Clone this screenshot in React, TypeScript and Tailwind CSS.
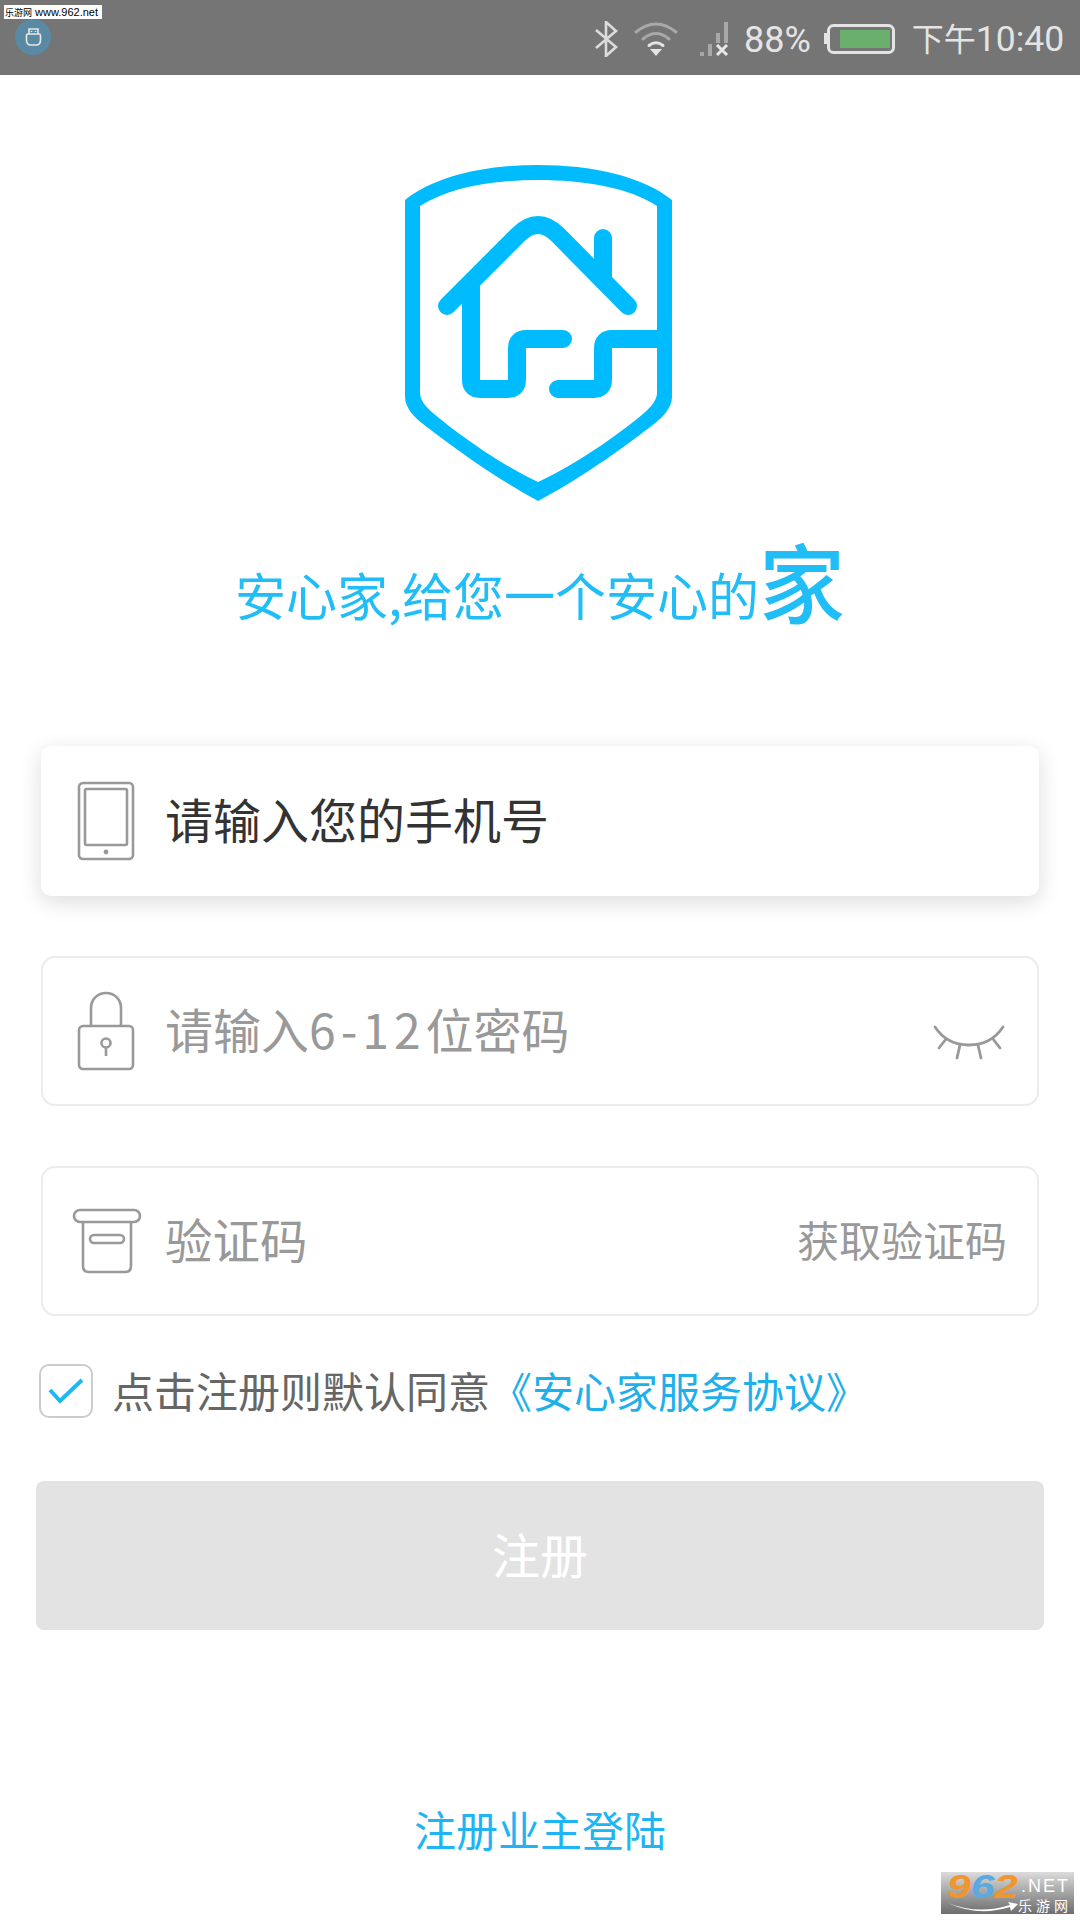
const F = '[font-family:"Noto_Sans_CJK_SC",sans-serif]';

// Shield-and-house brand mark
function BrandMark() {
  return (
    <svg width="320" height="360" viewBox="0 0 320 360" className="block" fill="none">
      <path
        fillRule="evenodd"
        fill="#00bcff"
        d="M25 50C55 26 105 15 158 15C212 15 262 26 292 50L292 247C292 258 282 268 274 274C252 291 207 325 158 351C110 325 65 291 43 274C35 268 25 258 25 247ZM40 56L40 243C40 250 46 257 53 263C68 276 115 312 158 332C202 312 249 276 264 263C271 257 277 250 277 243L277 56C250 38 205 30 158 30C110 30 68 38 40 56Z"
      />
      <g stroke="#00bcff" strokeWidth="18" strokeLinecap="round" strokeLinejoin="round">
        <path d="M67 156L138 85Q158 65 178 85L248 156" />
        <path d="M223 88L223 130" />
        <path d="M91 135L91 230Q91 239 100 239L128 239Q137 239 137 230L137 198Q137 189 146 189L183 189" />
        <path d="M178 239L214 239Q223 239 223 230L223 198Q223 189 232 189L280 189" />
      </g>
    </svg>
  );
}

function TabletIcon() {
  return (
    <svg width="58" height="80" viewBox="0 0 58 80" fill="none" stroke="#999" strokeWidth="2.6">
      <rect x="2" y="2" width="54" height="76" rx="4" />
      <rect x="8" y="8" width="42" height="56" rx="1.5" />
      <circle cx="29" cy="71" r="2.4" fill="#999" stroke="none" />
    </svg>
  );
}

function LockIcon() {
  return (
    <svg width="58" height="80" viewBox="0 0 58 80" fill="none" stroke="#999" strokeWidth="2.6">
      <rect x="2" y="35" width="54" height="43" rx="4" />
      <path d="M14 35V17C14 8 21 2 29 2C37 2 44 8 44 17V35" />
      <circle cx="29" cy="52" r="4.5" />
      <path d="M29 56.5V65" />
    </svg>
  );
}

function BoxIcon() {
  return (
    <svg width="70" height="66" viewBox="0 0 70 66" fill="none" stroke="#999" strokeWidth="2.6">
      <rect x="2" y="2" width="66" height="12" rx="6" />
      <path d="M11 14V58Q11 64 17 64H53Q59 64 59 58V14" />
      <rect x="18" y="27" width="34" height="8" rx="4" />
    </svg>
  );
}

function ClosedEye() {
  return (
    <svg width="72" height="38" viewBox="0 0 72 38" fill="none" stroke="#999" strokeWidth="2.8" strokeLinecap="round">
      <path d="M2 2Q14 20 36 20Q58 20 70 2" />
      <path d="M13 14L6 23" />
      <path d="M27 20L24 33" />
      <path d="M45 20L48 33" />
      <path d="M60 14L67 23" />
    </svg>
  );
}

function StatusIcons() {
  return (
    <>
      <svg width="24" height="36" viewBox="0 0 24 36" fill="none" stroke="#dcdcdc" strokeWidth="2.6" className="ml-[594px] mt-[2px]">
        <path d="M2 9L22 26L12 35V1L22 10L2 27" />
      </svg>
      <svg width="44" height="36" viewBox="0 0 44 36" fill="none" strokeLinecap="round" className="ml-[16px] mt-[2px]">
        <path d="M2 11Q22 -5 42 11" stroke="#a8a8a8" strokeWidth="3" />
        <path d="M9 18Q22 7 35 18" stroke="#a8a8a8" strokeWidth="3" />
        <path d="M15 24.5Q22 19 29 24.5" stroke="#e4e4e4" strokeWidth="3" />
        <path d="M16 28H28L22 35Z" fill="#e4e4e4" />
      </svg>
      <svg width="30" height="36" viewBox="0 0 30 36" className="ml-[22px] mt-[2px]" fill="#a8a8a8">
        <rect x="0" y="31" width="4" height="4" />
        <rect x="8" y="23" width="4" height="12" />
        <rect x="16" y="12" width="4" height="10" />
        <rect x="24" y="1" width="4" height="21" />
        <path d="M17 24L27 34M27 24L17 34" stroke="#e8e8e8" strokeWidth="3" fill="none" />
      </svg>
    </>
  );
}

export default function App() {
  return (
    <div className={`relative w-[1080px] h-[1920px] bg-white flex flex-col ${F}`}>
      <div className="relative h-[75px] bg-[#757575] flex items-center shrink-0">
        <StatusIcons />
        <span className="ml-[14px] mt-[4px] text-[36px] leading-none text-[#e4e4e4] font-['Roboto',sans-serif]">88%</span>
        <svg width="71" height="30" viewBox="0 0 71 30" className="ml-[13px] mt-[2px]" fill="none">
          <rect x="0" y="9" width="4" height="11" fill="#e4e4e4" />
          <rect x="4.5" y="1.5" width="65" height="27" rx="5" stroke="#e4e4e4" strokeWidth="3" />
          <rect x="16" y="6" width="50" height="18" fill="#6ab06c" />
        </svg>
        <span className="ml-[17px] mt-[4px] text-[32px] leading-none text-[#e4e4e4] whitespace-nowrap">
          下午<span className="text-[35.5px] font-['Roboto',sans-serif]">10:40</span>
        </span>
        <div className="absolute left-[4px] top-[5px] w-[98px] h-[14px] bg-white text-black flex items-center pl-[1px] whitespace-nowrap">
          <span className="text-[9px] leading-none">乐游网</span>
          <span className="ml-[3px] text-[11px] leading-none font-['Liberation_Sans',sans-serif]">www.962.net</span>
        </div>
        <div className="absolute left-[15px] top-[19px] w-[36px] h-[36px] rounded-full bg-[#5a8aa3] flex items-center justify-center">
          <svg width="17" height="18" viewBox="0 0 17 18" fill="none" stroke="#e8e8e8" strokeWidth="1.6">
            <path d="M4 6V1H13V6" />
            <path d="M3 6H14Q15.5 6 15.5 7.5V12Q15.5 17 11 17H6Q1.5 17 1.5 12V7.5Q1.5 6 3 6Z" />
            <path d="M6.5 3V4M10.5 3V4" />
          </svg>
        </div>
      </div>

      <div className="flex justify-center pt-[75px] shrink-0">
        <BrandMark />
      </div>

      <div className="mt-[0px] h-[120px] flex items-end justify-center text-[#20bdf7] whitespace-nowrap">
        <span className="text-[51px] leading-[70px] mb-[1px]">安心家,给您一个安心的</span>
        <span className="text-[86px] leading-[100px] font-medium">家</span>
      </div>

      <div className="px-[41px] mt-[116px] flex flex-col">
        <div className="h-[150px] rounded-[10px] bg-white flex items-center shadow-[0_6px_22px_rgba(0,0,0,0.14)]">
          <div className="w-[124px] pl-[36px] shrink-0"><TabletIcon /></div>
          <span className="mb-[6px] text-[48px] text-[#333333] leading-none">请输入您的手机号</span>
        </div>
        <div className="mt-[60px] h-[150px] rounded-[14px] border-2 border-[#ececec] flex items-center">
          <div className="w-[122px] pl-[34px] shrink-0"><LockIcon /></div>
          <span className="mb-[6px] text-[48px] text-[#999999] leading-none whitespace-nowrap">
            请输入<span className="tracking-[5px]">6-12</span>位密码
          </span>
          <div className="ml-auto mr-[32px] mt-[26px]"><ClosedEye /></div>
        </div>
        <div className="mt-[60px] h-[150px] rounded-[14px] border-2 border-[#ececec] flex items-center">
          <div className="w-[122px] pl-[29px] shrink-0"><BoxIcon /></div>
          <span className="mb-[4px] text-[47.5px] text-[#999999] leading-none">验证码</span>
          <span className="ml-auto mr-[30px] mb-[4px] text-[42px] text-[#999999] leading-none">获取验证码</span>
        </div>
      </div>

      <div className="pl-[39px] mt-[48px] flex items-center h-[54px]">
        <div className="w-[54px] h-[54px] rounded-[10px] border-2 border-[#cccccc] flex items-center justify-center">
          <svg width="36" height="28" viewBox="0 0 36 28" fill="none" stroke="#1bb8f2" strokeWidth="4">
            <path d="M2 13L12 24L34 3" />
          </svg>
        </div>
        <span className="ml-[19px] mb-[3px] text-[42px] leading-none text-[#666666] whitespace-nowrap">点击注册则默认同意</span>
        <span className="mb-[3px] text-[42px] leading-none text-[#1fb0ec] whitespace-nowrap">《安心家服务协议》</span>
      </div>

      <div className="mx-[36px] mt-[63px] h-[149px] pb-[6px] rounded-[8px] bg-[#e3e3e3] flex items-center justify-center text-[48px] text-white">
        注册
      </div>

      <div className="mt-[167px] text-center text-[42px] leading-[64px] text-[#20b4f2]">注册业主登陆</div>

      {/* Download-site badge pinned to the corner */}
      <div className="absolute left-[941px] top-[1872px] w-[133px] h-[42px] bg-gradient-to-b from-[#dcdcdc] to-[#6e6e6e]">
        <span className="absolute left-[6px] top-0 text-[34px] leading-[28px] font-bold italic font-['Liberation_Sans',sans-serif] tracking-[0px] scale-x-125 origin-left">
          <span className="text-[#f0962c]">9</span>
          <span className="text-[#5aa9e0]">6</span>
          <span className="text-[#f0962c]">2</span>
        </span>
        <span className="absolute left-[80px] top-[4px] text-[18px] leading-[20px] text-white font-['Liberation_Sans',sans-serif] tracking-[2px]">.NET</span>
        <span className="absolute left-[77px] top-[24px] text-[14px] leading-[18px] text-white tracking-[4px]">乐游网</span>
        <svg width="70" height="12" viewBox="0 0 70 12" fill="none" className="absolute left-[7px] top-[29px]">
          <path d="M0 2Q30 14 62 4L60 1L70 3L63 10L62 6Q30 16 0 2Z" fill="#ffffff" />
        </svg>
      </div>
    </div>
  );
}
